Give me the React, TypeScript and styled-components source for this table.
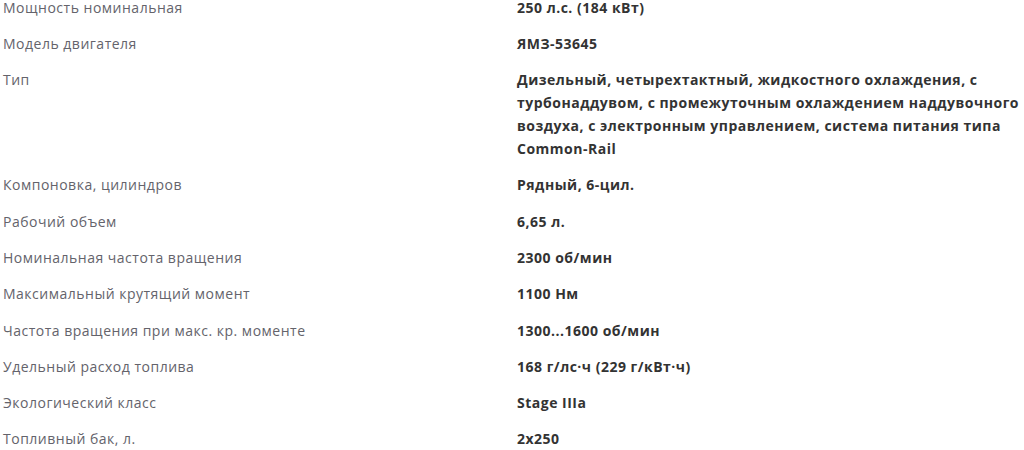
import React from "react";
import styled, { createGlobalStyle } from "styled-components";

const Global = createGlobalStyle`
  html, body { margin: 0; padding: 0; background: #ffffff; overflow: hidden; }
  body { font-family: "Open Sans", "Noto Sans", Arial, sans-serif; }
`;

const Table = styled.dl`
  margin: -11px 0 0 0;
  padding: 0 2px 0 3px;
  display: grid;
  grid-template-columns: 514px 1fr;
  font-size: 14px;
  line-height: 23px;
  letter-spacing: 0.5px;
`;

const Label = styled.dt`
  margin: 0;
  padding: 6.65px 0;
  color: #64636b;
  font-weight: 400;
`;

const Value = styled.dd`
  margin: 0;
  padding: 6.65px 0;
  color: #333333;
  font-weight: 700;
`;

const rows: [string, string][] = [
  ["Мощность номинальная", "250 л.с. (184 кВт)"],
  ["Модель двигателя", "ЯМЗ-53645"],
  [
    "Тип",
    "Дизельный, четырехтактный, жидкостного охлаждения, с турбонаддувом, с промежуточным охлаждением наддувочного воздуха, с электронным управлением, система питания типа Common-Rail",
  ],
  ["Компоновка, цилиндров", "Рядный, 6-цил."],
  ["Рабочий объем", "6,65 л."],
  ["Номинальная частота вращения", "2300 об/мин"],
  ["Максимальный крутящий момент", "1100 Нм"],
  ["Частота вращения при макс. кр. моменте", "1300...1600 об/мин"],
  ["Удельный расход топлива", "168 г/лс·ч (229 г/кВт·ч)"],
  ["Экологический класс", "Stage IIIa"],
  ["Топливный бак, л.", "2x250"],
];

export default function App() {
  return (
    <>
      <Global />
      <Table>
        {rows.map(([k, v]) => (
          <React.Fragment key={k}>
            <Label>{k}</Label>
            <Value>{v}</Value>
          </React.Fragment>
        ))}
      </Table>
    </>
  );
}
